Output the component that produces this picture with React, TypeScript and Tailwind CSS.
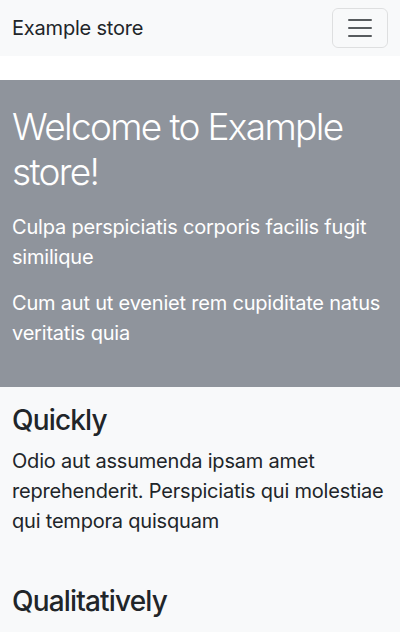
export default function App() {
  return (
    <div className="min-h-[632px] bg-white text-[#212529] font-['Inter','Noto_Sans',sans-serif]">
      <nav className="flex items-center justify-between bg-[#f8f9fa] px-3 py-2">
        <a className="py-[5px] text-[20px] leading-[30px] tracking-[-0.01em]">Example store</a>
        <button className="flex h-10 w-14 items-center justify-center rounded-md border border-black/10">
          <svg width="30" height="30" viewBox="0 0 30 30">
            <path
              d="M4 7h22M4 15h22M4 23h22"
              stroke="rgba(33,37,41,0.75)"
              strokeWidth="2"
              strokeLinecap="round"
              strokeMiterlimit="10"
            />
          </svg>
        </button>
      </nav>

      <main className="mt-6">
        <section className="bg-[#8f949c] px-3 pt-6 pb-[23px] text-white">
          <h1 className="mb-[18px] text-[37px] leading-[45px] font-light tracking-[-0.045em]">
            Welcome to Example store!
          </h1>
          <p className="mb-4 text-[20px] leading-[30px] tracking-[-0.01em]">
            Culpa perspiciatis corporis facilis fugit similique
          </p>
          <p className="mb-4 text-[20px] leading-[30px] tracking-[-0.01em]">
            Cum aut ut eveniet rem cupiditate natus veritatis quia
          </p>
        </section>

        <section className="bg-[#f8f9fa] px-3 pt-[17px] pb-10">
          <div>
            <h2 className="mb-2 text-[28px] leading-[33.6px] font-medium tracking-[-0.03em]">Quickly</h2>
            <p className="text-[20px] leading-[30px] tracking-[-0.01em]">
              Odio aut assumenda ipsam amet reprehenderit. Perspiciatis qui molestiae qui tempora quisquam
            </p>
          </div>
          <div className="mt-[49px]">
            <h2 className="mb-2 text-[28px] leading-[33.6px] font-medium tracking-[-0.03em]">Qualitatively</h2>
            <p className="text-[20px] leading-[30px] tracking-[-0.01em]">
              Voluptatibus libero dolorum accusantium quia et similique nesciunt
            </p>
          </div>
        </section>
      </main>
    </div>
  );
}
